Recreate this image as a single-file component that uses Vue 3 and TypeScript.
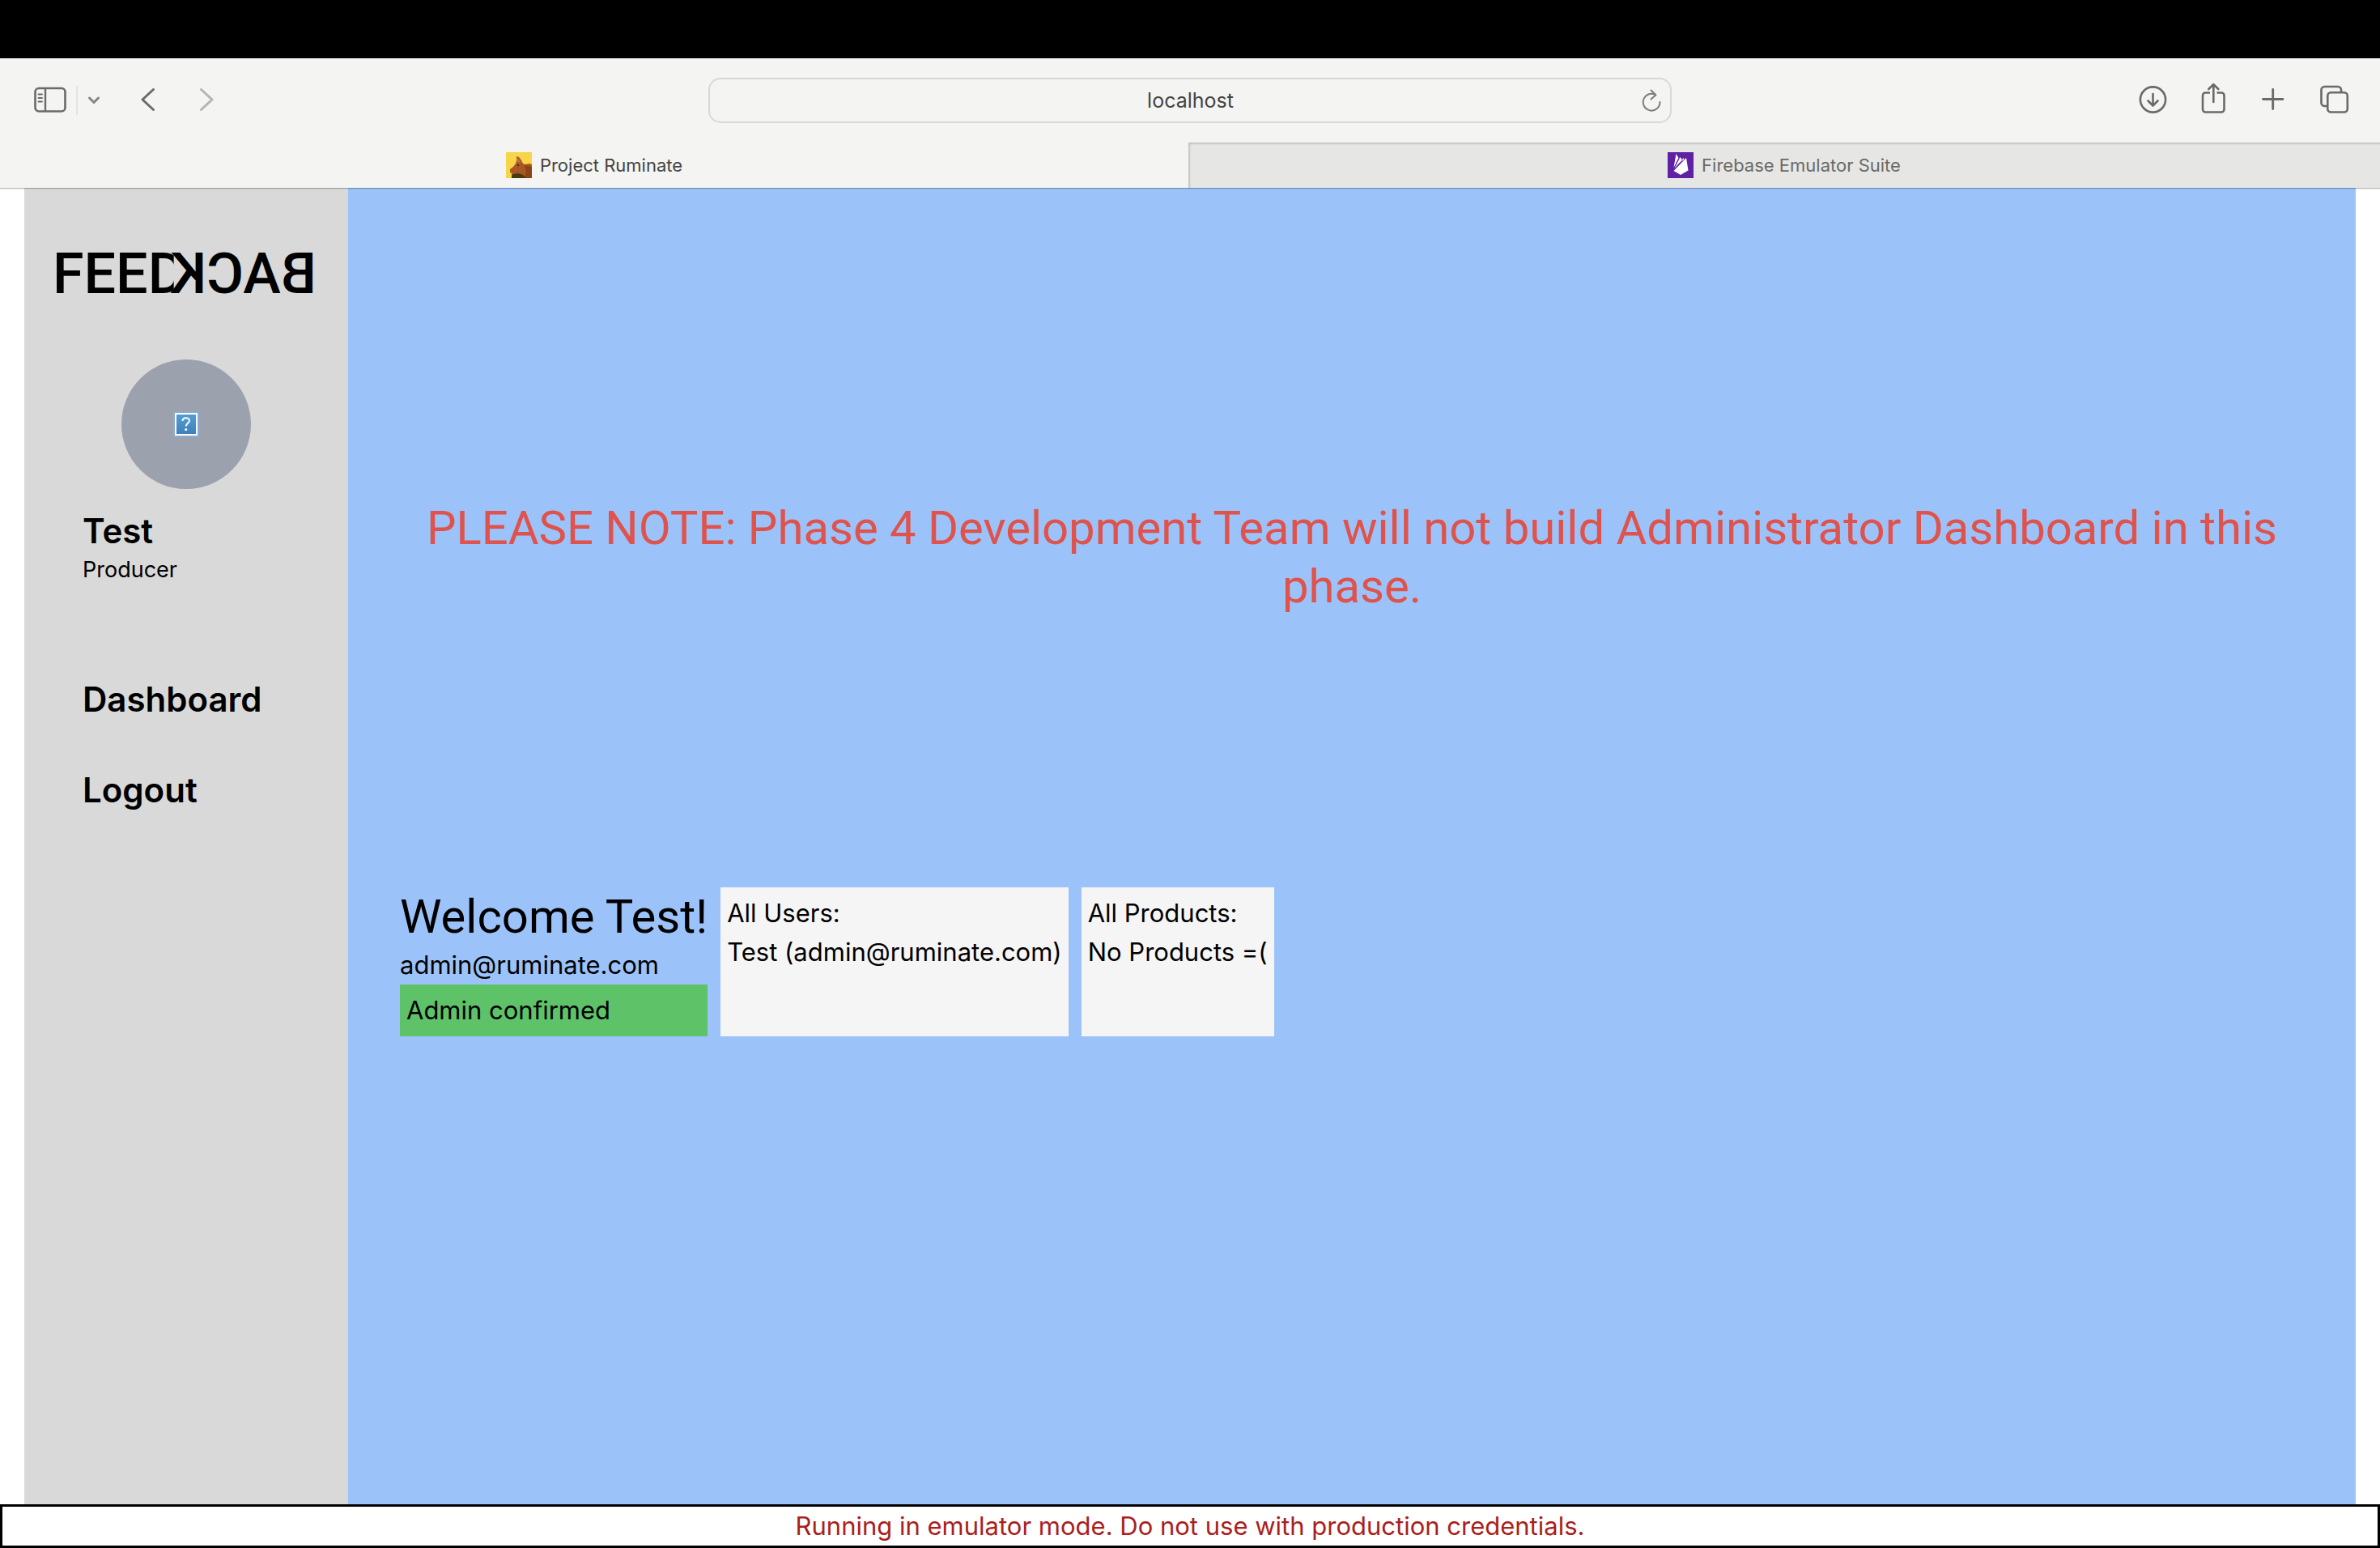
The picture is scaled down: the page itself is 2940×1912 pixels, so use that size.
<script setup lang="ts">
interface User {
  name: string
  email: string
  role: string
}

const user: User = { name: 'Test', email: 'admin@ruminate.com', role: 'Producer' }
const users: User[] = [user]
const navItems: string[] = ['Dashboard', 'Logout']
const address = 'localhost'
</script>

<template>
  <div class="screen">
    <div class="menubar"></div>

    <header class="browser">
      <div class="toolbar">
        <div class="tools tools-left">
          <button class="tool" type="button" aria-label="Show sidebar">
            <svg width="40" height="36" viewBox="0 0 40 36" fill="none" stroke="#6a6a68">
              <rect x="1.500" y="3" width="37" height="28.500" rx="4.500" stroke-width="2.600" />
              <path d="M14 3V31.500" stroke-width="2.400" />
              <path d="M5.500 10.500h4.500M5.500 15h4.500M5.500 19.500h4.500" stroke-width="1.800" stroke-linecap="round" />
            </svg>
          </button>
          <span class="divider"></span>
          <button class="tool" type="button" aria-label="Tab groups">
            <svg width="16" height="36" viewBox="0 0 16 36" fill="none" stroke="#858589" stroke-width="3" stroke-linecap="round" stroke-linejoin="round">
              <path d="M2.500 15L8 20.500L13.500 15" />
            </svg>
          </button>
          <button class="tool arrow" type="button" aria-label="Back">
            <svg width="24" height="36" viewBox="0 0 24 36" fill="none" stroke="#6a6a68" stroke-width="3" stroke-linecap="round" stroke-linejoin="round">
              <path d="M17.500 4.500L4 17L17.500 29.500" />
            </svg>
          </button>
          <button class="tool arrow" type="button" aria-label="Forward">
            <svg width="24" height="36" viewBox="0 0 24 36" fill="none" stroke="#b5b5b3" stroke-width="3" stroke-linecap="round" stroke-linejoin="round">
              <path d="M4.500 4.500L18 17L4.500 29.500" />
            </svg>
          </button>
        </div>

        <div class="address">
          <input class="address-input" type="text" aria-label="Address" :value="address" />
          <button class="tool" type="button" aria-label="Reload">
            <svg width="24" height="30" viewBox="0 0 24 30" fill="none" stroke="#7d7d7b" stroke-width="2" stroke-linecap="round" stroke-linejoin="round">
              <path d="M22.500 17A10.400 10.400 0 1 1 16.500 7.800" />
              <path d="M11.500 2.500L17.500 8.200L11.500 13.500" />
            </svg>
          </button>
        </div>

        <div class="tools tools-right">
          <button class="tool" type="button" aria-label="Downloads">
            <svg width="36" height="40" viewBox="0 0 36 40" fill="none" stroke="#6a6a68" stroke-width="2.600" stroke-linecap="round" stroke-linejoin="round">
              <circle cx="18.500" cy="19" r="15.600" />
              <path d="M18.500 12V26M12.500 20.500L18.500 26.500L24.500 20.500" />
            </svg>
          </button>
          <button class="tool" type="button" aria-label="Share">
            <svg width="36" height="40" viewBox="0 0 36 40" fill="none" stroke="#6a6a68" stroke-width="2.600" stroke-linecap="round" stroke-linejoin="round">
              <path d="M14 10.500H8.500a3.500 3.500 0 0 0-3.500 3.500V31a3.500 3.500 0 0 0 3.500 3.500H28a3.500 3.500 0 0 0 3.500-3.500V14a3.500 3.500 0 0 0-3.500-3.500H22.500" stroke-linecap="butt" />
              <path d="M18.300 22V0.500M12.300 6L18.300 0.200L24.300 6" />
            </svg>
          </button>
          <button class="tool" type="button" aria-label="New tab">
            <svg width="36" height="40" viewBox="0 0 36 40" fill="none" stroke="#6a6a68" stroke-width="2.800" stroke-linecap="round">
              <path d="M4.500 18.500H29M16.700 6.500V30.500" />
            </svg>
          </button>
          <button class="tool" type="button" aria-label="Tab overview">
            <svg width="36" height="40" viewBox="0 0 36 40" fill="none" stroke="#6a6a68" stroke-width="2.600">
              <rect x="9.300" y="10.300" width="24.500" height="24.200" rx="4" />
              <path d="M9 27H5.500A4 4 0 0 1 1.500 23V7A4 4 0 0 1 5.500 3H22a4 4 0 0 1 4 4V10" />
            </svg>
          </button>
        </div>
      </div>

      <nav class="tabs" aria-label="Tabs">
        <a class="tab active" href="#ruminate">
          <svg class="favicon" viewBox="0 0 32 32">
            <rect width="32" height="32" fill="#f8d548" />
            <path d="M13 5l3 1 3 4 2 4 3 1 5-1 3 1v17H7v-6l-2-1v-4l4-3 3-4 1-3z" fill="#a95722" />
            <path d="M13 6l3 3 2 4-4-1z" fill="#bf7a4b" />
            <path d="M23 16l9 2v14h-9l2-8z" fill="#8c4217" />
            <circle cx="15" cy="16" r="1" fill="#33190c" />
            <path d="M7 32v-3c2-4 14-4 17 2v1z" fill="#443b12" />
          </svg>
          <span>Project Ruminate</span>
        </a>
        <a class="tab" href="#firebase">
          <svg class="favicon" viewBox="0 0 32 32">
            <rect width="32" height="32" fill="#5f20a3" />
            <path d="M7.500 23L23 7l2.500 15.500-9.500 5.500z" fill="#fff" />
            <path d="M7.500 19L10.500 2l3 5z" fill="#fff" />
            <path d="M8 20.500L15.500 6l2.500 3.500zM13.500 14l6-7 1 2z" fill="#fff" />
            <path d="M7.500 20.500L14 8M7.500 22L19 8.500" stroke="#5f20a3" stroke-width="0.700" />
          </svg>
          <span>Firebase Emulator Suite</span>
        </a>
      </nav>
    </header>

    <div class="app">
      <aside class="sidebar">
        <div class="logo" aria-label="FEEDBACK">
          <span>FEE</span><span class="logo-d">D</span><span class="logo-back">BACK</span>
        </div>
        <div class="avatar">
          <svg width="32" height="32" viewBox="0 0 32 32">
            <defs>
              <linearGradient id="missing" x1="0" y1="0" x2="0" y2="1">
                <stop offset="0" stop-color="#559fd2" />
                <stop offset="1" stop-color="#3f7fba" />
              </linearGradient>
            </defs>
            <rect width="32" height="32" fill="#8eabd2" />
            <rect x="3" y="3" width="26" height="26" fill="url(#missing)" stroke="#fff" stroke-width="2" />
            <path d="M11.500 12c0-5 8.500-5 8.500-.5 0 3-4.200 3-4.200 7" fill="none" stroke="#fff" stroke-width="2" />
            <circle cx="15.700" cy="22.500" r="1.600" fill="#fff" />
          </svg>
        </div>
        <div class="profile">
          <p class="name">{{ user.name }}</p>
          <p class="role">{{ user.role }}</p>
        </div>
        <nav class="menu" aria-label="Main">
          <a v-for="item in navItems" :key="item" class="menu-link" :href="'#' + item.toLowerCase()">{{ item }}</a>
        </nav>
      </aside>

      <main class="content">
        <h1 class="notice">PLEASE NOTE: Phase 4 Development Team will not build Administrator Dashboard in this phase.</h1>
        <div class="panels">
          <section>
            <h2 class="welcome">Welcome {{ user.name }}!</h2>
            <p>{{ user.email }}</p>
            <p class="confirmed">Admin confirmed</p>
          </section>
          <section class="card">
            <p>All Users:</p>
            <p v-for="u in users" :key="u.email">{{ u.name }} ({{ u.email }})</p>
          </section>
          <section class="card">
            <p>All Products:</p>
            <p>No Products =(</p>
          </section>
        </div>
      </main>
    </div>

    <footer class="emulator">Running in emulator mode. Do not use with production credentials.</footer>
  </div>
</template>

<style>
body {
  margin: 0;
  background: #fff;
}
</style>

<style scoped>
.screen {
  display: flex;
  flex-direction: column;
  min-height: 100vh;
  font-family: Inter, "Liberation Sans", sans-serif;
  font-size: 31px;
  line-height: 48px;
  color: #000;
}
p, h1, h2 {
  margin: 0;
  font-weight: 400;
}
a {
  color: inherit;
  text-decoration: none;
}
svg {
  display: block;
  overflow: visible;
}
.menubar {
  height: 72px;
  background: #000;
}
.browser {
  position: relative;
  background: #f4f4f2;
  box-shadow: 0 1px 0 rgba(0, 0, 0, 0.2), 0 2px 0 rgba(0, 0, 0, 0.08);
}
.toolbar {
  display: grid;
  grid-template-columns: 1fr 1190px 1fr;
  align-items: center;
  height: 104px;
}
.tools {
  display: flex;
  align-items: center;
}
.tools-left {
  gap: 12px;
  padding-left: 42px;
}
.tools-right {
  justify-content: flex-end;
  gap: 39px;
  padding-right: 38px;
}
.tool {
  padding: 0;
  border: 0;
  background: none;
}
.divider {
  width: 2px;
  height: 36px;
  background: #e4e4e2;
}
.arrow {
  margin-left: 36px;
}
.address {
  display: flex;
  align-items: center;
  box-sizing: border-box;
  height: 56px;
  padding: 0 11px 0 36px;
  border: 2px solid #d8d8d6;
  border-radius: 15px;
}
.address-input {
  flex: 1;
  min-width: 0;
  padding: 0;
  border: 0;
  background: none;
  font-family: inherit;
  font-size: 25px;
  color: #444442;
  text-align: center;
}
.tabs {
  display: grid;
  grid-template-columns: calc(50% - 2px) 1fr;
  height: 56px;
}
.tab {
  display: flex;
  align-items: center;
  justify-content: center;
  gap: 10px;
  background: #e6e6e4;
  box-shadow: inset 2px 2px 2px #c4c4c2;
  font-size: 22px;
  color: #6a6a68;
}
.tab.active {
  background: #f4f4f2;
  box-shadow: none;
  color: #444442;
}
.favicon {
  width: 32px;
  height: 32px;
}
.app {
  display: flex;
  flex: 1;
  margin: 0 30px;
  background: linear-gradient(90deg, #d9d9d9 400px, #9cc3f9 400px);
}
.sidebar {
  box-sizing: border-box;
  width: 400px;
  padding-top: 70px;
}
.logo {
  display: flex;
  padding-left: 35px;
  font-family: Roboto, "Liberation Sans", sans-serif;
  font-size: 70px;
  font-weight: 500;
  line-height: 72px;
}
/* The D gives way to the arms of the mirrored K, which close its bowl. */
.logo-d {
  width: 28px;
  clip-path: inset(0 -4px 0 0);
}
.logo-back {
  transform: scaleX(-1);
}
.avatar {
  display: flex;
  align-items: center;
  justify-content: center;
  width: 160px;
  height: 160px;
  margin: 70px auto 24px;
  border-radius: 50%;
  background: #9ca1ae;
}
.profile {
  padding-left: 72px;
}
.name, .menu-link {
  font-size: 42px;
  font-weight: 600;
  line-height: 56px;
}
.role {
  font-size: 27px;
  line-height: 40px;
}
.menu {
  display: flex;
  flex-direction: column;
  gap: 56px;
  padding: 112px 0 0 72px;
}
.content {
  flex: 1;
  padding: 384px 64px 64px;
}
.notice, .welcome {
  font-family: Roboto, "Liberation Sans", sans-serif;
  font-size: 58px;
  line-height: 72px;
}
.notice {
  color: #df534c;
  text-align: center;
}
.panels {
  display: flex;
  gap: 16px;
  margin-top: 336px;
}
.confirmed {
  padding: 8px;
  background: #5ec269;
}
.card {
  padding: 8px;
  background: #f5f5f5;
}
.emulator {
  border: 3px solid #000;
  background: #fff;
  color: #a9211b;
  text-align: center;
}
</style>
